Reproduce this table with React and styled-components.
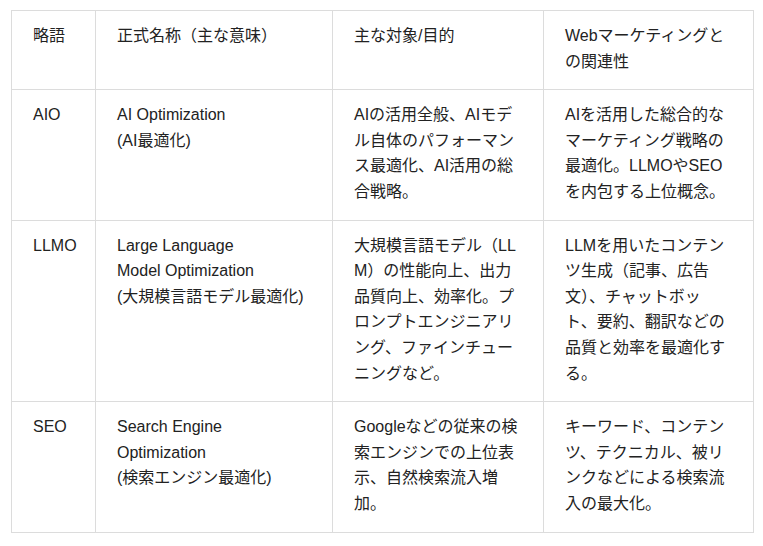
import React from "react";
import styled, { createGlobalStyle } from "styled-components";

const Global = createGlobalStyle`
  html, body { margin: 0; padding: 0; background: #fff; }
  body {
    font-family: "Liberation Sans", "Noto Sans CJK JP", sans-serif;
    color: #222;
  }
`;

const Page = styled.div`
  padding: 10px 10px 10px 11px;
`;

const Table = styled.table`
  border-collapse: collapse;
  table-layout: fixed;
  width: 742px;
  font-size: 16px;
  line-height: 25.6px;
`;

const Col = styled.col`
  width: ${(p) => p.$w}px;
`;

const Cell = styled.td`
  border: 1px solid #dcdcdc;
  padding: 12px 20px 15px 21px;
  vertical-align: top;
  text-align: left;
  font-weight: normal;
`;

const HeadCell = styled(Cell).attrs({ as: "th" })``;

const Line = styled.span`
  display: block;
  white-space: nowrap;
`;

const Lines = ({ lines }) => (
  <>
    {lines.map((l, i) => (
      <Line key={i}>{l}</Line>
    ))}
  </>
);

const header = [
  ["略語"],
  ["正式名称（主な意味）"],
  ["主な対象/目的"],
  ["Webマーケティングと", "の関連性"],
];

const rows = [
  [
    ["AIO"],
    ["AI Optimization", "(AI最適化)"],
    ["AIの活用全般、AIモデ", "ル自体のパフォーマン", "ス最適化、AI活用の総", "合戦略。"],
    ["AIを活用した総合的な", "マーケティング戦略の", "最適化。LLMOやSEO", "を内包する上位概念。"],
  ],
  [
    ["LLMO"],
    ["Large Language", "Model Optimization", "(大規模言語モデル最適化)"],
    [
      "大規模言語モデル（LL",
      "M）の性能向上、出力",
      "品質向上、効率化。プ",
      "ロンプトエンジニアリ",
      "ング、ファインチュー",
      "ニングなど。",
    ],
    [
      "LLMを用いたコンテン",
      "ツ生成（記事、広告",
      "文）、チャットボッ",
      "ト、要約、翻訳などの",
      "品質と効率を最適化す",
      "る。",
    ],
  ],
  [
    ["SEO"],
    ["Search Engine", "Optimization", "(検索エンジン最適化)"],
    ["Googleなどの従来の検", "索エンジンでの上位表", "示、自然検索流入増", "加。"],
    ["キーワード、コンテン", "ツ、テクニカル、被リ", "ンクなどによる検索流", "入の最大化。"],
  ],
];

export default function App() {
  return (
    <>
      <Global />
      <Page>
        <Table>
          <colgroup>
            <Col $w={84} />
            <Col $w={237} />
            <Col $w={211} />
            <Col $w={210} />
          </colgroup>
          <thead>
            <tr>
              {header.map((h, i) => (
                <HeadCell key={i}>
                  <Lines lines={h} />
                </HeadCell>
              ))}
            </tr>
          </thead>
          <tbody>
            {rows.map((r, ri) => (
              <tr key={ri}>
                {r.map((c, ci) => (
                  <Cell key={ci}>
                    <Lines lines={c} />
                  </Cell>
                ))}
              </tr>
            ))}
          </tbody>
        </Table>
      </Page>
    </>
  );
}
